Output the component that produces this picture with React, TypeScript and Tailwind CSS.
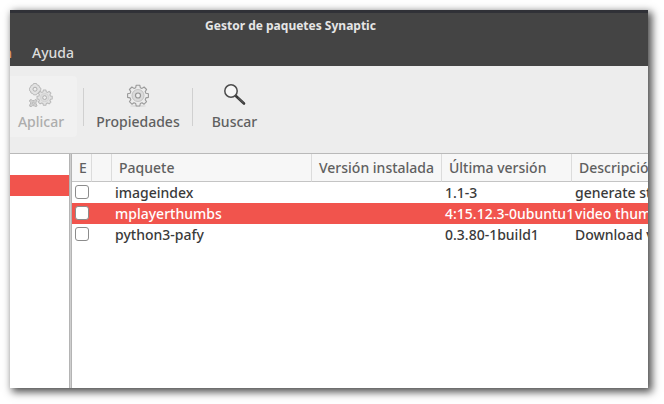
import React from "react";

type Pkg = { name: string; latest: string; description: string; selected?: boolean };

const packages: Pkg[] = [
  { name: "imageindex", latest: "1.1-3", description: "generate static" },
  { name: "mplayerthumbs", latest: "4:15.12.3-0ubuntu1", description: "video thumbnail", selected: true },
  { name: "python3-pafy", latest: "0.3.80-1build1", description: "Download videos" },
];

const cog =
  "M9.2 1.2h3.600l.5 2.500 1.700.7 2.100-1.400 2.500 2.500-1.400 2.100.7 1.700 2.500.5v3.600l-2.500.5-.7 1.700 1.400 2.100-2.500 2.500-2.100-1.400-1.700.7-.5 2.500H9.200l-.5-2.500-1.700-.7-2.100 1.400-2.500-2.500 1.400-2.100-.7-1.700-2.500-.5V9.800l2.500-.5.7-1.700-1.400-2.100L4.900 3 7 4.400l1.700-.7z";

function GearIcon() {
  return (
    <svg className="h-6 w-6" viewBox="-1 -1 24 24" aria-hidden="true">
      <ellipse cx="11" cy="22" rx="8" ry="1" fill="#dcdcdc" />
      <path d={cog} fill="#ececec" stroke="#999" strokeWidth="1.100" strokeLinejoin="round" />
      <circle cx="11" cy="11.500" r="6" fill="#dadada" stroke="#c2c2c2" />
      <circle cx="11" cy="11.500" r="2.500" fill="#eee" stroke="#959595" strokeWidth="1.200" />
    </svg>
  );
}

function ApplyIcon() {
  return (
    <svg className="h-6 w-6" viewBox="0 0 24 24" aria-hidden="true">
      <g fill="#e2e2e2" stroke="#b9b9b9" strokeLinejoin="round">
        <path d="M4.500.5h3l.7 1.500 1.800.5.500 2 1.300.5v2.500l-1.300.5-.5 2-1.800.5-.7 1.300h-3l-.7-1.300-1.800-.5-.5-2L.3 7.500V5l1.200-.5.500-2L3.800 2z" />
        <circle cx="6" cy="6.200" r="2" fill="#eee" stroke="#b0b0b0" />
        <path d="M.8 17l1.500-.5 1 1h1.900l1-1 1.500.5.3 1.300-1 1.200v1.500l1 1-.3 1.300-1.500.4-1-1H3.300l-1 1-1.500-.4-.3-1.300 1-1v-1.500l-1-1.200z" fill="#cfcfcf" />
        <circle cx="4.300" cy="20.200" r="1" fill="#eee" />
        <g transform="translate(7.600 6.200) scale(.73)">
          <path d={cog} strokeWidth="1.400" />
          <circle cx="11" cy="11.500" r="5.500" fill="#dcdcdc" stroke="#d0d0d0" />
          <circle cx="11" cy="11.500" r="2.600" fill="#eee" stroke="#b0b0b0" strokeWidth="1.350" />
        </g>
      </g>
    </svg>
  );
}

function SearchIcon() {
  return (
    <svg className="h-6 w-6" viewBox="0 0 24 24" aria-hidden="true">
      <path d="M13.200 13.200L21 20.500" stroke="#393939" strokeWidth="2.600" strokeLinecap="round" />
      <path d="M15 14.700L20.500 19.900" stroke="#777" strokeWidth=".7" />
      <circle cx="8" cy="8" r="6.200" fill="#f7f7f7" stroke="#4c4c4c" strokeWidth="1.500" />
    </svg>
  );
}

function Separator() {
  return <div className="mt-3 h-[38px] w-px shrink-0 bg-[#d0d0d0]" />;
}

const tool = "flex h-[61px] shrink-0 flex-col items-center gap-[5px] pt-[7px]";
const head = "overflow-hidden border-r border-b border-r-[#dcdcdc] border-b-[#c4c4c4] bg-[#f7f7f7] pl-[7px] text-left font-medium text-[#606060] whitespace-nowrap";
const cell = "overflow-hidden pl-[3px] whitespace-nowrap";

export default function App() {
  return (
    <div className="h-screen overflow-hidden bg-white pt-[10px] pr-4 pb-4 pl-[10px] font-['Noto_Sans','Open_Sans',sans-serif] text-[14px] leading-5 font-medium">
      <div className="flex h-full flex-col overflow-hidden bg-white shadow-[3px_3px_8px_1px_rgba(0,0,0,0.7)]">
        <header className="h-14 shrink-0 border-t-3 border-[#303137] bg-[#444]">
          <h1 className="pt-[3px] pr-[77px] text-center text-[12px] leading-5 font-bold text-[#e6e6e6]">
            Gestor de paquetes Synaptic
          </h1>
          <nav className="flex gap-5 pt-[7px] text-[#dcdcdc]">
            <button className="flex w-[2px] justify-end overflow-hidden text-[#d99a62]">n</button>
            <button>Ayuda</button>
          </nav>
        </header>

        <div className="flex h-[88px] shrink-0 border-b border-[#b9b9b9] bg-[#ededed] pt-[10px] text-[#606060]">
          <button disabled className={`${tool} mr-[6px] w-[67px] rounded-r-sm bg-[#f1f1f1] pr-[5px] text-[#adadad]`}>
            <ApplyIcon />
            Aplicar
          </button>
          <Separator />
          <button className={`${tool} w-[108px]`}>
            <GearIcon />
            Propiedades
          </button>
          <Separator />
          <button className={`${tool} w-[83px]`}>
            <SearchIcon />
            Buscar
          </button>
        </div>

        <div className="flex min-h-0 flex-1">
          <aside className="w-[59px] shrink-0 pt-[21px]">
            <div className="h-[21px] bg-[#f1544d]" />
          </aside>
          <div className="w-[3px] shrink-0 border-x border-[#b4b4b4] bg-[#cfcfcf]" />
          <main className="min-w-0 flex-1 overflow-hidden">
            <table className="w-full table-fixed border-separate border-spacing-0 text-[#3a3a3a]">
              <colgroup>
                <col className="w-5" />
                <col className="w-5" />
                <col className="w-[200px]" />
                <col className="w-[130px]" />
                <col className="w-[130px]" />
                <col />
              </colgroup>
              <thead>
                <tr className="h-7">
                  <th className={head}>E</th>
                  <th className={head} />
                  <th className={head}>Paquete</th>
                  <th className={head}>Versión instalada</th>
                  <th className={head}>Última versión</th>
                  <th className={`${head} border-r-0`}>Descripción</th>
                </tr>
              </thead>
              <tbody>
                {packages.map((p) => (
                  <tr key={p.name} className={p.selected ? "h-[21px] bg-[#f1544d] text-white" : "h-[21px]"}>
                    <td className={cell}>
                      <input
                        type="checkbox"
                        aria-label={p.name}
                        className="mb-px block h-[14px] w-[14px] appearance-none rounded-[3px] border border-[#8c8c8c] bg-white"
                      />
                    </td>
                    <td className={cell} />
                    <td className={cell}>{p.name}</td>
                    <td className={cell} />
                    <td className={cell}>{p.latest}</td>
                    <td className={cell}>{p.description}</td>
                  </tr>
                ))}
              </tbody>
            </table>
          </main>
        </div>
      </div>
    </div>
  );
}
